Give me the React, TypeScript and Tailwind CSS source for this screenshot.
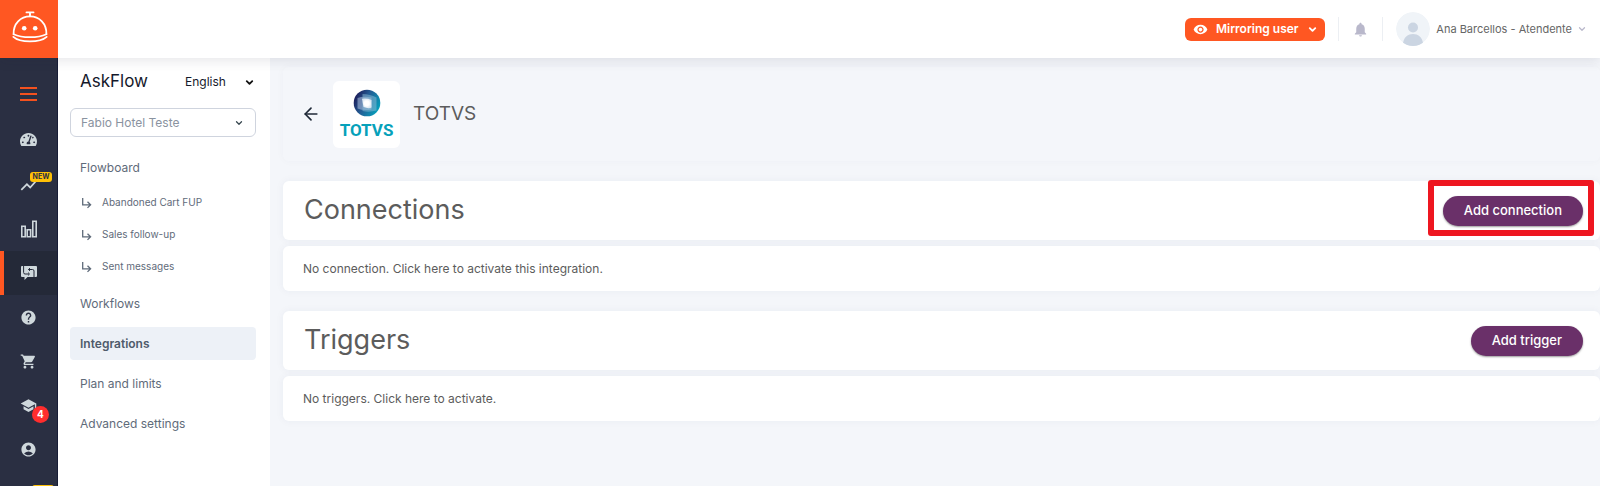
import React, { useState } from 'react';
import { ArrowLeft, ChevronDown } from 'lucide-react';
import { FaTachometerAlt } from 'react-icons/fa';
import {
    MdAccountCircle,
    MdHelp,
    MdNotifications,
    MdSchool,
    MdShoppingCart,
    MdShowChart,
    MdVisibility,
} from 'react-icons/md';

const BellLogo: React.FC = () => (
    <svg viewBox="0 0 36 32" className="w-9 h-8" fill="none" stroke="#fff" strokeLinecap="round">
        <path d="M14.5 1.4h7M18 1.6v3.6" strokeWidth="1.9" />
        <path d="M1.6 23.2C1.2 12.6 8.6 5.4 18 5.4s16.8 7.2 16.4 17.8" strokeWidth="1.8" />
        <path d="M1.6 23.2C10 27.2 26 27.2 34.4 23.2" strokeWidth="1.7" />
        <path d="M1.3 25.8C8 31.8 28 31.8 34.7 25.8" strokeWidth="1.7" />
        <circle cx="12.2" cy="17.3" r="2.3" fill="#fff" stroke="none" />
        <circle cx="23.2" cy="17.3" r="2.3" fill="#fff" stroke="none" />
    </svg>
);

const BarsIcon: React.FC = () => (
    <svg viewBox="0 0 18 18" className="w-[18px] h-[18px]" fill="none" stroke="currentColor" strokeWidth="1.6">
        <path d="M1.8 6.2h3.4v10.6h-3.4zM7.2 9.8h3.4v7h-3.4zM12.8 1.2h3.4v15.6h-3.4z" />
    </svg>
);

const FlowIcon: React.FC = () => (
    <svg viewBox="0 0 16 14" className="w-4 h-[14px]" fill="currentColor">
        <path d="M1 0h14a1 1 0 0 1 1 1v9a1 1 0 0 1-1 1H6.5L3.5 14v-3H1a1 1 0 0 1-1-1V1a1 1 0 0 1 1-1z" />
        <path
            d="M2.6 0v6.5q0 1.5 1.5 1.5h3.5M7 6.6 8.5 8 7 9.4M13 11V5q0-1.5-1.5-1.5H7.5M9 2.1 7.5 3.5 9 4.9"
            fill="none"
            stroke="#242938"
            strokeWidth="1"
        />
    </svg>
);

const SubArrow: React.FC = () => (
    <svg viewBox="0 0 12 12" className="w-3 h-3" fill="none" stroke="currentColor" strokeWidth="1.3">
        <path d="M1.7 1v6.8h7.6M6.5 4.7l3.1 3.1-3.1 3.1" />
    </svg>
);

const TotvsSphere: React.FC = () => (
    <svg viewBox="0 0 28 28" className="w-7 h-7">
        <defs>
            <linearGradient id="sphere" x1="0" y1="0.2" x2="1" y2="0.7">
                <stop offset="0" stopColor="#1b1552" />
                <stop offset="0.45" stopColor="#235c94" />
                <stop offset="1" stopColor="#04a3bd" />
            </linearGradient>
            <radialGradient id="shine">
                <stop offset="0.5" stopColor="#ffffff" />
                <stop offset="1" stopColor="#dce8f3" />
            </radialGradient>
        </defs>
        <circle cx="14" cy="14" r="13.3" fill="url(#sphere)" />
        <path d="M4.500 9q6-2 14-.5v12q-8 1.500-14-1z" fill="#a3b6d6" opacity="0.600" />
        <path d="M9.500 5q7.500 0 14 3.500v13q-7 2-14 .5z" fill="#8fc0da" opacity="0.500" />
        <path d="M9 9.800q5-.8 9.500 1.200v7.500q-3 1.500-8-.5z" fill="url(#shine)" />
    </svg>
);

const railItems = [
    { label: 'Dashboard', icon: <FaTachometerAlt size={17} className="mb-1" /> },
    { label: 'Trends', icon: <MdShowChart size={20} />, isNew: true },
    { label: 'Reports', icon: <BarsIcon /> },
    { label: 'AskFlow', icon: <FlowIcon />, active: true },
    { label: 'Help', icon: <MdHelp size={17} /> },
    { label: 'Store', icon: <MdShoppingCart size={17} /> },
    { label: 'Academy', icon: <MdSchool size={17} />, count: 4 },
    { label: 'Account', icon: <MdAccountCircle size={17} /> },
];

const menuItems = [
    { label: 'Flowboard', children: ['Abandoned Cart FUP', 'Sales follow-up', 'Sent messages'] },
    { label: 'Workflows' },
    { label: 'Integrations', active: true },
    { label: 'Plan and limits' },
    { label: 'Advanced settings' },
];

const Rail: React.FC = () => (
    <nav className="w-[58px] shrink-0 bg-[#2a2f42] border-r border-[#171c36] text-[#cfd8dc] overflow-hidden">
        <div className="h-[61px] pt-[10px] flex items-center justify-center">
            <button aria-label="Menu" className="w-[17px] flex flex-col gap-1">
                <span className="h-[2px] bg-[#f4511e]" />
                <span className="h-[2px] bg-[#f4511e]" />
                <span className="h-[2px] bg-[#f4511e]" />
            </button>
        </div>
        {railItems.map((item) => (
            <a
                key={item.label}
                href="#"
                aria-label={item.label}
                className={`relative h-11 flex items-center justify-center border-l-4 pr-1 ${
                    item.active ? 'bg-[#242938] border-[#ff5722]' : 'border-transparent'
                }`}
            >
                {item.icon}
                {item.isNew && (
                    <span className="absolute left-[26px] top-[9px] w-[22px] h-[10px] rounded-[3px] bg-[#ffc107] text-[#2a2f42] text-[7px] leading-[10px] font-bold text-center">
                        NEW
                    </span>
                )}
                {item.count && (
                    <span className="absolute left-[28px] top-[23px] w-[17px] h-[17px] rounded-full bg-[#ff2d2d] text-white text-[10px] leading-[17px] font-bold text-center">
                        {item.count}
                    </span>
                )}
            </a>
        ))}
        <a href="#" aria-label="More" className="block h-11 pl-8 pt-[14px]">
            <span className="block w-[22px] h-[10px] rounded-[3px] bg-[#ffc107]" />
        </a>
    </nav>
);

const SideMenu: React.FC = () => {
    const [language, setLanguage] = useState('English');

    return (
        <aside className="w-[212px] shrink-0 bg-white pl-3 pr-[14px] pt-3 text-[#5f6b7a]">
            <div className="flex items-center justify-between h-6 pl-[10px]">
                <h1 className="text-[17px] text-[#15192b]">AskFlow</h1>
                <div className="relative flex items-center">
                    <select
                        aria-label="Language"
                        value={language}
                        onChange={(e) => setLanguage(e.target.value)}
                        className="w-[71px] appearance-none bg-transparent text-xs text-[#15192b] outline-none"
                    >
                        <option>English</option>
                        <option>Português</option>
                    </select>
                    <ChevronDown size={11} strokeWidth={4} className="absolute right-[1px] text-[#111] pointer-events-none" />
                </div>
            </div>
            <div className="relative mt-[14px] flex items-center">
                <select
                    aria-label="Account"
                    className="w-full h-[29px] appearance-none rounded-md border border-[#cfd4de] bg-white px-[10px] text-xs text-[#8a93a0] outline-none"
                >
                    <option>Fabio Hotel Teste</option>
                </select>
                <ChevronDown size={10} strokeWidth={3} className="absolute right-3 text-[#37474f] pointer-events-none" />
            </div>
            <nav className="mt-[10px] text-xs">
                {menuItems.map((item) => (
                    <div key={item.label}>
                        <div className="h-10 flex items-center">
                            <a
                                href="#"
                                className={`w-full h-[33px] flex items-center rounded px-[10px] pt-[2px] ${
                                    item.active ? 'bg-[#edf1f7] font-semibold text-[#4f5b6b]' : ''
                                }`}
                            >
                                {item.label}
                            </a>
                        </div>
                        {item.children?.map((child) => (
                            <a key={child} href="#" className="h-8 flex items-center gap-[9px] pl-[11px] text-[10px]">
                                <SubArrow />
                                {child}
                            </a>
                        ))}
                    </div>
                ))}
            </nav>
        </aside>
    );
};

const Header: React.FC = () => (
    <header className="relative z-10 h-[58px] shrink-0 flex items-center bg-white shadow-[0_2px_12px_rgba(30,35,60,0.12)]">
        <a href="#" aria-label="Home" className="w-[58px] h-[58px] flex items-center justify-center bg-[#ff5722] pb-1 pl-[2px]">
            <BellLogo />
        </a>
        <div className="ml-auto flex items-center pr-[13px]">
            <button className="w-[140px] h-[23px] flex items-center justify-center gap-2 rounded-md bg-[#ff5722] text-white text-xs font-semibold whitespace-nowrap">
                <MdVisibility size={15} />
                Mirroring user
                <ChevronDown size={11} strokeWidth={4} />
            </button>
            <span className="ml-[13px] w-px h-6 bg-[#eceff3]" />
            <button aria-label="Notifications" className="w-[43px] flex justify-center text-[#b9b8cb]">
                <MdNotifications size={17} />
            </button>
            <span className="w-px h-6 bg-[#eceff3]" />
            <button className="ml-[13px] flex items-center text-[11px] text-[#666]">
                <svg viewBox="0 0 34 34" className="w-[34px] h-[34px]">
                    <clipPath id="avatar">
                        <circle cx="17" cy="17" r="17" />
                    </clipPath>
                    <g clipPath="url(#avatar)">
                        <circle cx="17" cy="17" r="17" fill="#f0f4f8" />
                        <circle cx="17" cy="15.5" r="5" fill="#cbd5e2" />
                        <path d="M7 31c1-6 5-9 10-9s9 3 10 9v3H7z" fill="#cbd5e2" />
                    </g>
                </svg>
                <span className="ml-[6px]">Ana Barcellos - Atendente</span>
                <ChevronDown size={10} strokeWidth={3} className="ml-[5px] text-[#b9b8cb]" />
            </button>
        </div>
    </header>
);

interface SectionProps {
    title: string;
    action: string;
    emptyText: string;
    highlighted?: boolean;
}

const Section: React.FC<SectionProps> = ({ title, action, emptyText, highlighted }) => (
    <section className="mt-5 text-[#5c5c5c]">
        <div className="h-[59px] flex items-center justify-between rounded-md bg-white pl-[21px] pr-[17px] shadow-[0_0_8px_rgba(40,50,90,0.05)]">
            <h2 className="text-[27px]">{title}</h2>
            <div className="relative">
                <button className="block h-[30px] rounded-full bg-[#6a3069] px-[21px] text-[13px] font-medium text-white shadow-[0_1px_2px_rgba(0,0,0,0.4)]">
                    {action}
                </button>
                {highlighted && (
                    <span className="absolute -top-4 -bottom-[10px] -left-[15px] -right-[11px] rounded-[3px] border-[6px] border-[#ee1620] pointer-events-none" />
                )}
            </div>
        </div>
        <div className="mt-[6px] h-[45px] flex items-center rounded-md bg-white px-5 text-xs shadow-[0_0_8px_rgba(40,50,90,0.05)]">
            {emptyText}
        </div>
    </section>
);

const App: React.FC = () => {
    return (
        <div className="h-screen flex flex-col overflow-hidden bg-[#f4f6fa] font-['Inter',sans-serif]">
            <Header />
            <div className="flex flex-1 min-h-0">
                <Rail />
                <SideMenu />
                <main className="flex-1 min-w-0 pl-[13px] pt-[9px]">
                    {/* Integration title */}
                    <div className="h-[94px] flex items-center rounded-md pl-[18px] shadow-[0_0_8px_rgba(40,50,90,0.03)]">
                        <button aria-label="Back" className="text-[#1f2937]">
                            <ArrowLeft size={20} strokeWidth={2} />
                        </button>
                        <div className="ml-3 w-[67px] h-[67px] flex flex-col items-center justify-center rounded-md bg-white">
                            <TotvsSphere />
                            <span className="mt-[3px] text-[17px] leading-5 font-bold text-[#06a1ba] font-['Roboto',sans-serif]">
                                TOTVS
                            </span>
                        </div>
                        <h2 className="ml-[13px] text-[19px] text-[#5c5c5c]">TOTVS</h2>
                    </div>

                    <Section
                        title="Connections"
                        action="Add connection"
                        emptyText="No connection. Click here to activate this integration."
                        highlighted
                    />
                    <Section title="Triggers" action="Add trigger" emptyText="No triggers. Click here to activate." />
                </main>
            </div>
        </div>
    );
};

export default App;
